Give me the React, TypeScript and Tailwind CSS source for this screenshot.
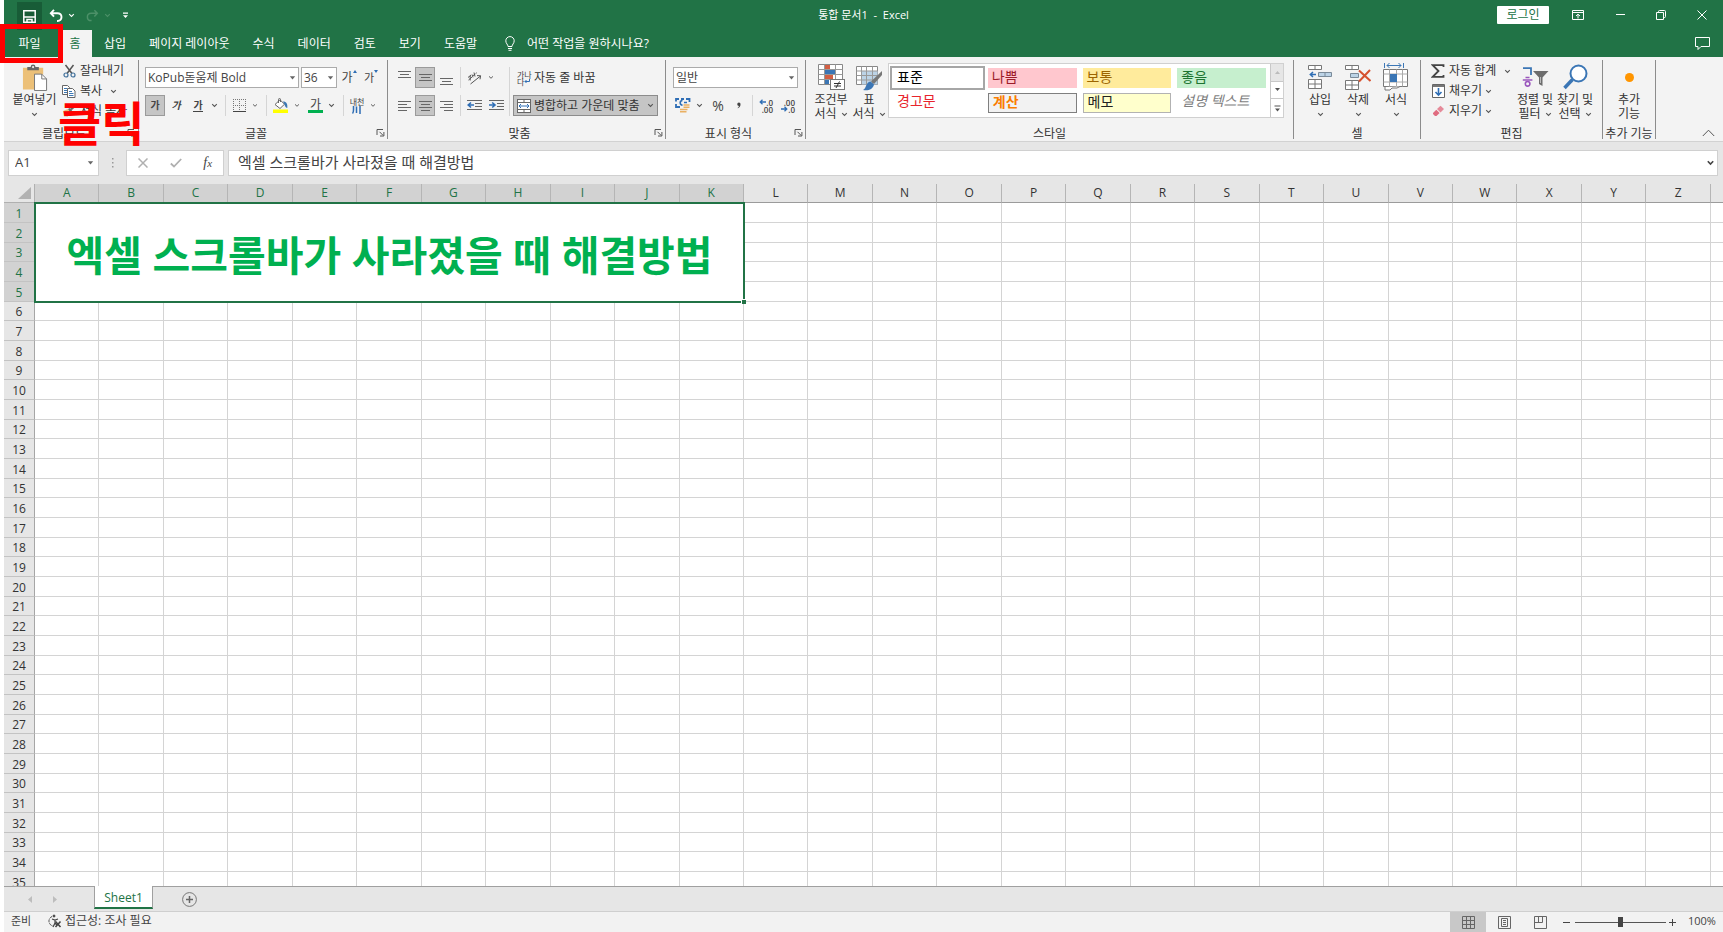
import React from "react";

type Kids = { children?: React.ReactNode };

const COLUMNS = "ABCDEFGHIJKLMNOPQRSTUVWXYZ".split("");
const ROWS = Array.from({ length: 35 }, (_, i) => i + 1);
const MERGED_COLS = 11;
const MERGED_ROWS = 5;
const TITLE = "엑셀 스크롤바가 사라졌을 때 해결방법";

/* ---------- small drawing helpers ---------- */

function Chevron({ className = "text-[#555]" }: { className?: string }) {
  return (
    <svg width="7" height="5" viewBox="0 0 7 5" fill="none" className={className} aria-hidden="true">
      <path d="M1.2 1.2 3.5 3.4 5.8 1.2" stroke="currentColor" strokeWidth="1.1" />
    </svg>
  );
}

function Triangle() {
  return (
    <svg width="7" height="4" viewBox="0 0 7 4" className="text-[#666]" aria-hidden="true">
      <path d="M0.8 0.3h5.4L3.5 3.6z" fill="currentColor" />
    </svg>
  );
}

function Launcher({ label }: { label: string }) {
  return (
    <button type="button" aria-label={label} className="flex w-[14px] items-center justify-center">
      <svg width="9" height="9" viewBox="0 0 9 9" fill="none" stroke="#555" aria-hidden="true">
        <path d="M1 7V1.5h6M3.5 3.8l3.6 3.6M7.9 4v4H4" />
      </svg>
    </button>
  );
}

function Lines({ rows, width = 13 }: { rows: [number, number, number][]; width?: number }) {
  return (
    <svg width={width} height="14" viewBox={`0 0 ${width} 14`} stroke="#666" aria-hidden="true">
      {rows.map(([x1, x2, y], i) => (
        <path key={i} d={`M${x1} ${y}.5H${x2}`} />
      ))}
    </svg>
  );
}

/* ---------- ribbon building blocks ---------- */

function Group({
  label,
  width,
  launcher = false,
  children,
}: Kids & { label: string; width: string; launcher?: boolean }) {
  return (
    <section aria-label={label} className={`flex h-[79px] shrink-0 flex-col border-r border-[#8c8c8c] ${width}`}>
      <div className="flex h-[66px]">{children}</div>
      <div className="flex h-[13px] text-[#333]">
        <span className="flex-1 text-center leading-[15px] whitespace-nowrap">{label}</span>
        {launcher && <Launcher label={`${label} 설정`} />}
      </div>
    </section>
  );
}

function Tool({
  label,
  className = "w-[22px]",
  active = false,
  children,
}: Kids & { label: string; className?: string; active?: boolean }) {
  return (
    <button
      type="button"
      aria-label={label}
      className={`flex h-[21px] shrink-0 items-center justify-center ${className} ${
        active ? "border border-[#9a9a9a] bg-[#c5c5c5]" : ""
      }`}
    >
      {children}
    </button>
  );
}

function Divider({ className = "h-[21px]" }: { className?: string }) {
  return <span className={`w-px shrink-0 bg-[#d5d5d5] ${className}`} />;
}

function BigButton({
  icon,
  lines,
  width,
  chevron = "none",
}: {
  icon: React.ReactNode;
  lines: string[];
  width: string;
  chevron?: "none" | "below" | "inline";
}) {
  return (
    <button type="button" className={`flex shrink-0 flex-col items-center pt-px text-[#333] ${width}`}>
      <span className="flex h-8 items-center justify-center">{icon}</span>
      {lines.map((line, i) => (
        <span key={line} className="flex items-center gap-1 leading-[14px] whitespace-nowrap">
          {line}
          {chevron === "inline" && i === lines.length - 1 && <Chevron />}
        </span>
      ))}
      {chevron === "below" && (
        <span className="flex h-[14px] items-center">
          <Chevron />
        </span>
      )}
    </button>
  );
}

function SmallButton({ icon, text, chevron, gap = "gap-[3px]" }: { icon: React.ReactNode; text: string; chevron?: boolean; gap?: string }) {
  return (
    <button type="button" className="flex h-5 items-center gap-1 whitespace-nowrap text-[#333]">
      <span className="flex w-[14px] justify-center">{icon}</span>
      <span className={`flex items-center ${gap}`}>
        {text}
        {chevron && <Chevron />}
      </span>
    </button>
  );
}

function DropDown({ label, value, width }: { label: string; value: string; width: string }) {
  return (
    <div className={`relative shrink-0 ${width}`}>
      <select
        aria-label={label}
        defaultValue={value}
        className="block h-[21px] w-full appearance-none border border-[#ababab] bg-white pl-[2px] leading-[19px] text-[#444] outline-none"
      >
        <option>{value}</option>
      </select>
      <span className="pointer-events-none absolute inset-y-0 right-[3px] flex items-center">
        <Triangle />
      </span>
    </div>
  );
}

/* ---------- ribbon icons ---------- */

const PasteIcon = () => (
  <svg width="26" height="27" viewBox="0 0 26 28" aria-hidden="true">
    <path d="M.5 4h21v7h-9v15.500H.5z" fill="#ecc078" />
    <path d="M5 3h3.500a2.500 2.500 0 0 1 5 0H17v3.500H5z" fill="#666" />
    <circle cx="11" cy="3.2" r="1.1" fill="#f2f2f2" />
    <path d="M12.500 10.500h7.500l5 5v12h-12.500z" fill="#fff" stroke="#777" />
    <path d="M20 10.500v5h5" fill="none" stroke="#777" />
  </svg>
);

const CutIcon = () => (
  <svg width="13" height="14" viewBox="0 0 13 14" fill="none" aria-hidden="true">
    <path d="M2.500 1 9 9.500M10.500 1 4 9.500" stroke="#555" strokeWidth="1.500" />
    <circle cx="3" cy="11" r="2" stroke="#41719c" strokeWidth="1.200" />
    <circle cx="10" cy="11" r="2" stroke="#41719c" strokeWidth="1.200" />
  </svg>
);

const CopyIcon = () => (
  <svg width="14" height="13" viewBox="0 0 14 13" aria-hidden="true">
    <path d="M0.500 0.500h5l2 2v7h-7z" fill="#fff" stroke="#666" />
    <path d="M2 3.500h3M2 5.500h3M2 7.500h3" stroke="#3c78b4" />
    <path d="M5.500 3.500h5l2.500 2.500v6.500h-7.500z" fill="#fff" stroke="#666" />
    <path d="M7 6.500h3M7 8.500h4.500M7 10.500h4.500" stroke="#3c78b4" />
  </svg>
);

const BrushIcon = () => (
  <svg width="14" height="13" viewBox="0 0 14 13" aria-hidden="true">
    <path d="M1 6l5-2 3 4-4 4z" fill="#ecc078" />
    <path d="M6 4l2-1 3 4-2 1.500z" fill="#666" />
    <path d="M9 4.500 13 1" stroke="#666" strokeWidth="2" />
  </svg>
);

const BordersIcon = () => (
  <svg width="13" height="13" viewBox="0 0 13 13" stroke="#777" fill="none" aria-hidden="true">
    <path d="M0 .5h13M.5 0v12M12.500 0v12M6.500 0v12M0 6.500h13" strokeDasharray="1 1" />
    <path d="M0 12.500h13" stroke="#444" />
  </svg>
);

const FillIcon = () => (
  <svg width="15" height="15" viewBox="0 0 15 15" aria-hidden="true">
    <path d="M2 6.500 7 1.800l4.500 4.400L7 10.500z" fill="#fff" stroke="#666" />
    <path d="M5.500 5V1.500a1 1 0 0 1 2 0V4" fill="none" stroke="#666" />
    <path d="M10 3.500c3.500 0 4.800 2.500 4.300 6.500-2-.5-2.300-2.500-3-4z" fill="#3c78b4" />
    <rect y="11.500" width="15" height="3.500" fill="#ffff00" />
  </svg>
);

const OrientationIcon = () => (
  <svg width="15" height="14" viewBox="0 0 15 14" fill="none" stroke="#555" aria-hidden="true">
    <path d="M1 6.500 4 4M3.200 5v4.500M1.500 9l3.500-3M5 3.500l1 2.800M7 1.500l1 4M5.800 4.800l2-1.400M8.500 2.800l1.200-1" />
    <path d="M3.500 13 13.500 5M10 4.600l3.600.2-.6 3.500" />
  </svg>
);

const IndentIcon = ({ out = false }: { out?: boolean }) => (
  <svg width="15" height="13" viewBox="0 0 15 13" aria-hidden="true">
    <path d="M0 1.500h15M8 4.500h7M8 7.500h7M0 10.500h15" stroke="#666" />
    {out ? (
      <path d="M7 6H2M4 3.500 1.200 6 4 8.500" stroke="#2f6eb5" strokeWidth="1.600" fill="none" />
    ) : (
      <path d="M0 6h5M3.200 3.500 6 6 3.200 8.500" stroke="#2f6eb5" strokeWidth="1.600" fill="none" />
    )}
  </svg>
);

const WrapIcon = () => (
  <span className="flex w-[14px] flex-col text-[8px] leading-[7px] text-[#444]">
    <span className="whitespace-nowrap">가나</span>
    <span className="flex items-center">
      다
      <svg width="6" height="5" viewBox="0 0 6 5" fill="none" stroke="#2f6eb5" aria-hidden="true">
        <path d="M5.500 0v2.500H1M2.500 1 1 2.500 2.500 4" />
      </svg>
    </span>
  </span>
);

const MergeIcon = () => (
  <svg width="14" height="14" viewBox="0 0 14 14" aria-hidden="true">
    <rect x=".5" y=".5" width="13" height="13" fill="#fff" stroke="#666" />
    <path d="M.5 3.500h13M.5 10.500h13M7 .5v3M7 10.500v3" stroke="#666" />
    <path d="M2 7h10M4 5 2 7l2 2M10 5l2 2-2 2" stroke="#2f6eb5" fill="none" />
  </svg>
);

const CurrencyIcon = () => (
  <svg width="16" height="15" viewBox="0 0 16 15" aria-hidden="true">
    <path d="M1 3.500V1h3M11 1h3.500v3M1 6v3h4M6 1h3" fill="none" stroke="#2f6eb5" strokeWidth="1.800" />
    <path d="M7.500 2.500a2.300 2.300 0 1 0 0 4.600M9 4.500h3" fill="none" stroke="#2f6eb5" strokeWidth="1.600" />
    <path d="M8.500 7h6M8.500 9.200h6M5 11.500h7.500M5 13.700h6.500" stroke="#eab062" strokeWidth="1.600" />
  </svg>
);

const DecimalIcon = ({ more = false }: { more?: boolean }) => (
  <span className="flex w-[14px] flex-col text-[8px] leading-[7px] font-semibold text-[#444]">
    <span className="flex items-center justify-end">
      {more && (
        <svg width="7" height="6" viewBox="0 0 7 6" fill="none" stroke="#2f6eb5" strokeWidth="1.300" aria-hidden="true">
          <path d="M7 3H1M3.500.8 1.200 3l2.300 2.200" />
        </svg>
      )}
      {more ? ".0" : ".00"}
    </span>
    <span className="flex items-center justify-end">
      {!more && (
        <svg width="7" height="6" viewBox="0 0 7 6" fill="none" stroke="#2f6eb5" strokeWidth="1.300" aria-hidden="true">
          <path d="M0 3h6M3.500.8 5.800 3 3.500 5.200" />
        </svg>
      )}
      {more ? ".00" : ".0"}
    </span>
  </span>
);

const ConditionalIcon = () => (
  <svg width="28" height="28" viewBox="0 0 28 28" aria-hidden="true">
    <path d="M1.500 1.500h24v20h-24z" fill="#fff" stroke="#888" />
    <path d="M7.500 1.500v20M18.500 1.500v20M1.500 6.500h24M1.500 11.500h24M1.500 16.500h24" stroke="#999" />
    <path d="M8 2h5v4H8zM8 12h8v4H8z" fill="#d35f43" />
    <path d="M8 7h10v4H8zM8 17h4v4H8z" fill="#3b76b5" />
    <rect x="13.500" y="16.500" width="14" height="10" fill="#fff" stroke="#777" />
    <path d="M17 20.500h7M17 23h7M22.500 18.500l-3.500 6.500" stroke="#333" />
  </svg>
);

const TableFormatIcon = () => (
  <svg width="28" height="28" viewBox="0 0 28 28" aria-hidden="true">
    <path d="M1.500 3.500h21v18h-21z" fill="#fff" stroke="#888" />
    <path d="M7 8h15.500v13.500H7z" fill="#bcd3e6" />
    <path d="M6.500 3.500v18M11.500 3.500v18M17.500 3.500v18M1.500 8h21M1.500 12.500h21M1.500 17h21" stroke="#999" />
    <path d="M27 8v4l-8 9-3-2.500z" fill="#777" />
    <path d="M15.500 18.500l3.500 3c-1 5-6 6.500-11 5.500 3.500-1.500 2.500-7.500 7.500-8.500z" fill="#3b76b5" />
  </svg>
);

const InsertCellsIcon = () => (
  <svg width="24" height="26" viewBox="0 0 24 26" aria-hidden="true">
    <path d="M.5 1.500h13v4H.5zM7 1.500v4M.5 15.500h13v9H.5zM.5 20h13M7 15.500v9" fill="#fff" stroke="#777" />
    <path d="M10.500 8.500h13v4h-13zM17 8.500v4" fill="#bcd3e6" stroke="#7a8a99" />
    <path d="M8 10.500H3M5 8 2.300 10.500 5 13" fill="none" stroke="#2f6eb5" strokeWidth="1.500" />
  </svg>
);

const DeleteCellsIcon = () => (
  <svg width="26" height="26" viewBox="0 0 26 26" aria-hidden="true">
    <path d="M.5 1.500h13v4H.5zM7 1.500v4M.5 16.500h13v9H.5zM.5 21h13M7 16.500v9" fill="#fff" stroke="#777" />
    <path d="M5.500 9.500h8v4h-8z" fill="#bcd3e6" stroke="#7a8a99" />
    <path d="M14 6.500 25.500 17M25 6 14 17.500" fill="none" stroke="#d6512f" strokeWidth="2" />
  </svg>
);

const FormatCellsIcon = () => (
  <svg width="26" height="28" viewBox="0 0 26 28" aria-hidden="true">
    <path d="M1.500 0v5M20.500 0v5M4 2.500h14M6.500 0 4 2.500 6.500 5M15.500 0 18 2.500 15.500 5" fill="none" stroke="#3b76b5" />
    <path d="M.5 6.500h24v17H.5z" fill="#fff" stroke="#777" />
    <path d="M6.500 6.500v17M13.500 6.500v17M19.500 6.500v17M.5 11h24M.5 19h24" stroke="#aaa" />
    <path d="M7 11h7v8H7z" fill="#3b76b5" />
    <path d="M2 24v3h5l2-2h5l3-1.500" fill="#fff" stroke="#777" />
  </svg>
);

const SigmaIcon = () => (
  <svg width="14" height="14" viewBox="0 0 14 14" fill="none" stroke="#444" strokeWidth="1.800" aria-hidden="true">
    <path d="M12.500 3V1.200H1.800L7.500 7l-5.700 5.800h10.700V11" />
  </svg>
);

const FillDownIcon = () => (
  <svg width="13" height="14" viewBox="0 0 13 14" aria-hidden="true">
    <path d="M.5.5h12v13H.5z" fill="#fff" stroke="#666" />
    <path d="M1 1h11v2H1z" fill="#777" />
    <path d="M6.500 4v7M3.500 8l3 3.200 3-3.200" fill="none" stroke="#2f6eb5" strokeWidth="1.600" />
  </svg>
);

const EraserIcon = () => (
  <svg width="13" height="12" viewBox="0 0 13 12" aria-hidden="true">
    <path d="M8.500.8 12 4 8.500 7.500 5 4z" fill="#e58a99" />
    <path d="M4.300 4.800 7.600 8 4.500 11H3L1 9V8z" fill="#e06c80" />
  </svg>
);

const SortIcon = () => (
  <svg width="27" height="22" viewBox="0 0 27 22" fill="none" aria-hidden="true">
    <path d="M1 2.200h8V9" stroke="#3b76b5" strokeWidth="1.800" />
    <path d="M3.500 11.500h4M.8 14h9.600" stroke="#9a57bd" strokeWidth="1.600" />
    <circle cx="5.600" cy="17.800" r="2.300" stroke="#9a57bd" strokeWidth="1.600" />
    <path d="M11 5h15.500l-6 6.500V20l-3.500-2v-6.500z" fill="#6d6d6d" />
    <path d="M18.500 11v6" stroke="#bbb" />
  </svg>
);

const FindIcon = () => (
  <svg width="25" height="26" viewBox="0 0 25 26" fill="none" stroke="#3b76b5" aria-hidden="true">
    <circle cx="15.500" cy="9.500" r="8" fill="#fff" strokeWidth="2" />
    <path d="M9.500 15.500 1.500 24" strokeWidth="3.500" />
  </svg>
);

/* ---------- page sections ---------- */

function TitleBar() {
  return (
    <header className="grid h-[30px] grid-cols-[1fr_auto_1fr] items-center text-white">
      <div className="flex h-full items-center pl-[13px]">
        <button type="button" aria-label="저장" className="mt-[2px] flex h-7 w-[25px] items-center justify-center bg-[#185c37]">
          <svg width="13" height="13" viewBox="0 0 13 13" fill="none" stroke="#fff" strokeWidth="1.500" aria-hidden="true">
            <path d="M.8.8h11.400v11.400H.8zM.8 7h11.400M4 12V9.500h5V12" />
          </svg>
        </button>
        <button type="button" aria-label="실행 취소" className="ml-[6px] flex w-[15px] justify-center">
          <svg width="14" height="13" viewBox="0 0 14 13" fill="none" stroke="#fff" strokeWidth="1.900" aria-hidden="true">
            <path d="M5 .8 1.800 4.200 5 7.600M2 4.200h6.500c2.500 0 4 1.500 4 3.800S11 12 8.500 12H8" />
          </svg>
        </button>
        <button type="button" aria-label="실행 취소 목록" className="ml-[5px]">
          <Chevron className="text-white" />
        </button>
        <button type="button" aria-label="다시 실행" className="ml-[10px] flex w-[14px] justify-center">
          <svg width="13" height="13" viewBox="0 0 14 13" fill="none" stroke="#4c9068" strokeWidth="1.600" aria-hidden="true">
            <path d="M9 .8l3.200 3.400L9 7.600M12 4.200H5.500c-2.500 0-4 1.500-4 3.800S3 12 5.500 12H6" />
          </svg>
        </button>
        <button type="button" aria-label="다시 실행 목록" className="ml-[5px]">
          <Chevron className="text-[#4c9068]" />
        </button>
        <button type="button" aria-label="빠른 실행 도구 모음 사용자 지정" className="ml-[11px]">
          <svg width="7" height="7" viewBox="0 0 7 7" aria-hidden="true">
            <path d="M1 .5h5v1.200H1zM1 3.200h5L3.500 6z" fill="#fff" />
          </svg>
        </button>
      </div>
      <h1 className="text-[11px] whitespace-pre">통합 문서1{"  -  "}Excel</h1>
      <div className="flex items-center justify-end">
        <button type="button" className="mr-[20px] h-[18px] w-[52px] rounded-[1px] bg-white text-[12px] leading-[18px] text-[#217346]">
          로그인
        </button>
        <button type="button" aria-label="리본 메뉴 표시 옵션" className="flex w-[18px] justify-center">
          <svg width="12" height="10" viewBox="0 0 12 10" fill="none" stroke="#fff" aria-hidden="true">
            <path d="M.5.5h11v9H.5zM.5 2.500h11M6 8.500v-4M4 6l2-1.800L8 6" />
          </svg>
        </button>
        <button type="button" aria-label="최소화" className="ml-[24px] flex w-[18px] justify-center">
          <svg width="9" height="9" viewBox="0 0 9 9" stroke="#fff" aria-hidden="true">
            <path d="M0 3.500h9" />
          </svg>
        </button>
        <button type="button" aria-label="이전 크기로 복원" className="ml-[23px] flex w-[18px] justify-center">
          <svg width="10" height="10" viewBox="0 0 10 10" fill="none" stroke="#fff" aria-hidden="true">
            <path d="M.5 2.500h7v7h-7zM2.500 2.500V1.500q0-1 1-1h5q1 0 1 1v5q0 1-1 1h-1" />
          </svg>
        </button>
        <button type="button" aria-label="닫기" className="mr-[12px] ml-[23px] flex w-[18px] justify-center">
          <svg width="10" height="10" viewBox="0 0 10 10" stroke="#fff" aria-hidden="true">
            <path d="M.5.5l9 9M9.500.5l-9 9" />
          </svg>
        </button>
      </div>
    </header>
  );
}

function TabBar() {
  const tabs = ["삽입", "페이지 레이아웃", "수식", "데이터", "검토", "보기", "도움말"];
  return (
    <nav className="flex h-[27px] items-stretch text-white">
      <button type="button" className="w-[54px] pr-[3px]">파일</button>
      <button type="button" className="w-[34px] bg-[#f3f3f3] text-[#217346]">홈</button>
      {tabs.map((tab) => (
        <button key={tab} type="button" className="pr-[11px] pl-3 whitespace-nowrap">
          {tab}
        </button>
      ))}
      <button type="button" className="ml-[17px] flex items-center gap-3 whitespace-nowrap">
        <svg width="10" height="15" viewBox="0 0 10 15" fill="none" stroke="#fff" aria-hidden="true">
          <path d="M3 10.500C3 8.500.8 7.500.8 4.800a4.200 4.200 0 0 1 8.400 0C9.200 7.500 7 8.500 7 10.500zM3 12.500h4M3.500 14.300h3" />
        </svg>
        어떤 작업을 원하시나요?
      </button>
      <button type="button" aria-label="메모" className="mr-[13px] ml-auto">
        <svg width="15" height="13" viewBox="0 0 15 13" fill="none" stroke="#fff" aria-hidden="true">
          <path d="M.5.5h14v9H6l-3 3v-3H.5z" />
        </svg>
      </button>
    </nav>
  );
}

const STYLE_CELLS: [string, string][] = [
  ["나쁨", "bg-[#ffc7ce] pb-[3px] text-[#9c1c2a]"],
  ["보통", "bg-[#ffeb9c] pb-[3px] text-[#9c6500]"],
  ["좋음", "bg-[#c6efce] pb-[3px] text-[#1c7430]"],
  ["경고문", "pb-[4px] text-[#e8242c]"],
  ["계산", "border border-[#7f7f7f] bg-[#f2f2f2] pb-[4px] font-bold text-[#fa7d00]"],
  ["메모", "border border-[#b2b2b2] bg-[#ffffcc] pb-[4px] text-[#222]"],
  ["설명 텍스트", "pb-[4px] text-[#7f7f7f] italic"],
];

function StyleGallery() {
  return (
    <div className="mt-[3px] flex h-[55px] w-[396px] border border-[#d0d0d0] bg-white text-[14px]">
      <div className="grid flex-1 grid-cols-4 grid-rows-2 gap-x-[6px] gap-y-[5px] px-1 py-1">
        <button type="button" className="-mx-[3px] -my-[2px] border-2 border-[#a6a6a6] bg-white pb-[3px] pl-[5px] text-left leading-[17px] text-black">
          표준
        </button>
        {STYLE_CELLS.map(([name, look]) => (
          <button key={name} type="button" className={`h-5 pl-1 text-left leading-[16px] whitespace-nowrap ${look}`}>
            {name}
          </button>
        ))}
      </div>
      <div className="grid w-[13px] grid-rows-3 divide-y divide-[#c8c8c8] border-l border-[#c8c8c8]">
        <button type="button" aria-label="위로" className="flex items-center justify-center bg-[#e6e6e6]">
          <svg width="5" height="3" viewBox="0 0 5 3" aria-hidden="true"><path d="M0 3h5L2.500 0z" fill="#bbb" /></svg>
        </button>
        <button type="button" aria-label="아래로" className="flex items-center justify-center">
          <svg width="5" height="3" viewBox="0 0 5 3" aria-hidden="true"><path d="M0 0h5L2.500 3z" fill="#555" /></svg>
        </button>
        <button type="button" aria-label="자세히" className="flex items-center justify-center">
          <svg width="7" height="7" viewBox="0 0 7 7" aria-hidden="true"><path d="M.5.500h6v1h-6zM1 3.500h5L3.500 6.500z" fill="#555" /></svg>
        </button>
      </div>
    </div>
  );
}

function Ribbon() {
  return (
    <div className="flex h-[85px] border-b border-[#d2d2d2] bg-[#f3f3f3] pt-[3px]">
      <Group label="클립보드" width="w-[135px]" launcher>
        <BigButton icon={<PasteIcon />} lines={["붙여넣기"]} width="w-[58px] pl-[3px]" chevron="below" />
        <div className="flex flex-col pt-px">
          <SmallButton icon={<CutIcon />} text="잘라내기" />
          <SmallButton icon={<CopyIcon />} text="복사" chevron gap="gap-2" />
          <SmallButton icon={<BrushIcon />} text="서식 복사" />
        </div>
      </Group>

      <Group label="글꼴" width="w-[249px]" launcher>
        <div className="flex flex-col gap-[7px] pt-[7px] pl-[6px]">
          <div className="flex gap-[2px]">
            <DropDown label="글꼴" value="KoPub돋움제 Bold" width="w-[154px]" />
            <DropDown label="글꼴 크기" value="36" width="w-[36px]" />
            <Tool label="글꼴 크기 크게" className="w-5">
              <span className="flex items-start text-[12px] leading-[16px] text-[#444]">
                가<svg width="4" height="3" viewBox="0 0 4 3" aria-hidden="true"><path d="M0 3h4L2 0z" fill="#2f6eb5" /></svg>
              </span>
            </Tool>
            <Tool label="글꼴 크기 작게" className="w-5">
              <span className="flex items-start text-[11px] leading-[16px] text-[#444]">
                가<svg width="4" height="3" viewBox="0 0 4 3" aria-hidden="true"><path d="M0 0h4L2 3z" fill="#2f6eb5" /></svg>
              </span>
            </Tool>
          </div>
          <div className="flex text-[#444]">
            <Tool label="굵게" className="w-5" active>
              <span className="text-[10px] font-bold">가</span>
            </Tool>
            <Tool label="기울임꼴">
              <span className="text-[10px] font-bold italic">가</span>
            </Tool>
            <Tool label="밑줄">
              <span className="border-b border-[#444] text-[10px] leading-[11px] font-bold">가</span>
            </Tool>
            <Tool label="밑줄 종류" className="w-[10px]"><Chevron /></Tool>
            <span className="w-[6px]" />
            <Divider />
            <Tool label="테두리" className="w-[26px]"><BordersIcon /></Tool>
            <Tool label="테두리 종류" className="w-[6px]"><Chevron /></Tool>
            <span className="w-[8px]" />
            <Divider />
            <Tool label="채우기 색" className="w-[27px]"><FillIcon /></Tool>
            <Tool label="채우기 색 목록" className="w-[6px]"><Chevron /></Tool>
            <Tool label="글꼴 색" className="ml-[3px] w-[25px]">
              <span className="flex flex-col items-center text-[12px] leading-[11px]">
                가<span className="h-[3px] w-[15px] bg-[#00b050]" />
              </span>
            </Tool>
            <Tool label="글꼴 색 목록" className="w-[7px]"><Chevron /></Tool>
            <span className="w-[8px]" />
            <Divider />
            <Tool label="윗주 필드" className="w-[26px]">
              <span className="flex flex-col items-center text-[8px] leading-[8px] whitespace-nowrap">
                내천
                <svg width="9" height="8" viewBox="0 0 9 8" fill="none" stroke="#2f6eb5" strokeWidth="1.500" aria-hidden="true">
                  <path d="M1.500 0v4Q1.500 6.500.5 7.500M4.500.5V7M8 0v8" />
                </svg>
              </span>
            </Tool>
            <Tool label="윗주 옵션" className="w-[6px]"><Chevron /></Tool>
          </div>
        </div>
      </Group>

      <Group label="맞춤" width="w-[278px]" launcher>
        <div className="flex flex-col gap-[7px] pt-[7px] pl-[5px]">
          <div className="flex">
            <Tool label="위쪽 맞춤"><Lines rows={[[0, 13, 0], [2, 11, 3], [0, 13, 6]]} /></Tool>
            <Tool label="가운데 맞춤(세로)" className="w-5" active><Lines rows={[[0, 13, 3], [2, 11, 6], [0, 13, 9]]} /></Tool>
            <Tool label="아래쪽 맞춤"><Lines rows={[[0, 13, 7], [2, 11, 10], [0, 13, 13]]} /></Tool>
            <span className="w-[3px]" />
            <Divider />
            <Tool label="방향" className="w-[27px]"><OrientationIcon /></Tool>
            <Tool label="방향 목록" className="w-[6px]"><Chevron /></Tool>
          </div>
          <div className="flex">
            <Tool label="왼쪽 맞춤"><Lines rows={[[0, 13, 2], [0, 9, 5], [0, 13, 8], [0, 9, 11]]} /></Tool>
            <Tool label="가운데 맞춤" className="w-5" active><Lines rows={[[0, 13, 2], [2, 11, 5], [0, 13, 8], [2, 11, 11]]} /></Tool>
            <Tool label="오른쪽 맞춤"><Lines rows={[[0, 13, 2], [4, 13, 5], [0, 13, 8], [4, 13, 11]]} /></Tool>
            <span className="w-[3px]" />
            <Divider />
            <Tool label="내어쓰기" className="w-[26px]"><IndentIcon out /></Tool>
            <Tool label="들여쓰기" className="w-[18px]"><IndentIcon /></Tool>
          </div>
        </div>
        <div className="ml-[4px] flex pt-[7px]">
          <Divider className="h-[49px]" />
        </div>
        <div className="flex flex-col gap-[7px] pt-[7px] pl-[3px] text-[#333]">
          <button type="button" className="flex h-[21px] items-center gap-[3px] pl-[4px] whitespace-nowrap">
            <WrapIcon />
            자동 줄 바꿈
          </button>
          <button type="button" className="flex h-[21px] w-[145px] items-center gap-[3px] border border-[#8c8c8c] bg-[#c5c5c5] px-[3px] whitespace-nowrap">
            <MergeIcon />
            병합하고 가운데 맞춤
            <span className="ml-auto"><Chevron /></span>
          </button>
        </div>
      </Group>

      <Group label="표시 형식" width="w-[140px]" launcher>
        <div className="flex flex-col gap-[7px] pt-[7px] pl-[7px]">
          <DropDown label="표시 형식" value="일반" width="w-[125px]" />
          <div className="flex text-[#444]">
            <Tool label="회계 표시 형식" className="w-[20px]"><CurrencyIcon /></Tool>
            <Tool label="회계 표시 형식 목록" className="w-[13px]"><Chevron /></Tool>
            <Tool label="백분율 스타일" className="w-[24px]"><span className="text-[14px]">%</span></Tool>
            <Tool label="쉼표 스타일" className="w-[17px]">
              <svg width="4" height="7" viewBox="0 0 5 8" aria-hidden="true">
                <path d="M2.400.3a2 2 0 0 1 2 2.200C4.400 5 3 6.800 1 7.500L.7 7c1-.6 1.600-1.400 1.700-2.500A2.100 2.100 0 0 1 2.400.3z" fill="#444" />
              </svg>
            </Tool>
            <span className="w-[5px]" />
            <Divider />
            <Tool label="자릿수 늘림" className="w-[26px]"><DecimalIcon more /></Tool>
            <Tool label="자릿수 줄임" className="w-[18px]"><DecimalIcon /></Tool>
          </div>
        </div>
      </Group>

      <Group label="스타일" width="w-[488px]">
        <div className="flex pl-[6px]">
          <BigButton icon={<ConditionalIcon />} lines={["조건부", "서식"]} width="w-[38px]" chevron="inline" />
          <BigButton icon={<TableFormatIcon />} lines={["표", "서식"]} width="w-[38px]" chevron="inline" />
          <StyleGallery />
        </div>
      </Group>

      <Group label="셀" width="w-[127px]">
        <div className="flex pl-[7px]">
          <BigButton icon={<InsertCellsIcon />} lines={["삽입"]} width="w-[38px]" chevron="below" />
          <BigButton icon={<DeleteCellsIcon />} lines={["삭제"]} width="w-[38px]" chevron="below" />
          <BigButton icon={<FormatCellsIcon />} lines={["서식"]} width="w-[38px]" chevron="below" />
        </div>
      </Group>

      <Group label="편집" width="w-[182px]">
        <div className="flex w-[94px] flex-col pt-px pl-[10px]">
          <SmallButton icon={<SigmaIcon />} text="자동 합계" chevron gap="gap-2" />
          <SmallButton icon={<FillDownIcon />} text="채우기" chevron />
          <SmallButton icon={<EraserIcon />} text="지우기" chevron />
        </div>
        <BigButton icon={<SortIcon />} lines={["정렬 및", "필터"]} width="w-10" chevron="inline" />
        <BigButton icon={<FindIcon />} lines={["찾기 및", "선택"]} width="w-10" chevron="inline" />
      </Group>

      <Group label="추가 기능" width="w-[53px]">
        <BigButton
          icon={<span className="h-[9px] w-[9px] rounded-full bg-[#ff9500]" />}
          lines={["추가", "기능"]}
          width="w-full"
        />
      </Group>

      <button type="button" aria-label="리본 메뉴 축소" className="mr-[8px] mb-[4px] ml-auto self-end">
        <svg width="13" height="8" viewBox="0 0 13 8" fill="none" stroke="#555" aria-hidden="true">
          <path d="M.8 7 6.500 1.200 12.200 7" />
        </svg>
      </button>
    </div>
  );
}

function FormulaBar() {
  return (
    <div className="flex h-[42px] items-center bg-[#e6e6e6] pr-[5px] pl-[4px]">
      <div className="flex h-[26px] w-[91px] items-center border border-[#d0d0d0] bg-white pr-[4px]">
        <input aria-label="이름 상자" defaultValue="A1" className="w-0 flex-1 bg-transparent pl-[6px] text-[13px] text-[#444] outline-none" />
        <Triangle />
      </div>
      <svg width="3" height="12" viewBox="0 0 3 12" className="mx-[12px]" aria-hidden="true">
        <path d="M1 1h1.500v1.500H1zM1 5h1.500v1.500H1zM1 9h1.500v1.500H1z" fill="#999" />
      </svg>
      <div className="flex h-[26px] w-[98px] items-center justify-around border border-[#d0d0d0] bg-white">
        <button type="button" aria-label="취소">
          <svg width="10" height="10" viewBox="0 0 10 10" stroke="#b0b0b0" strokeWidth="1.500" aria-hidden="true"><path d="M.5.5l9 9M9.500.5l-9 9" /></svg>
        </button>
        <button type="button" aria-label="입력">
          <svg width="12" height="10" viewBox="0 0 12 10" fill="none" stroke="#b0b0b0" strokeWidth="1.800" aria-hidden="true"><path d="M.8 5.500 4 8.500 11.200 1" /></svg>
        </button>
        <button type="button" aria-label="함수 삽입" className="font-['Liberation_Serif',serif] text-[14px] leading-4 text-[#444] italic">
          f<span className="text-[11px]">x</span>
        </button>
      </div>
      <div className="ml-1 flex h-[26px] flex-1 items-center border border-[#d0d0d0] bg-white pr-[3px]">
        <input aria-label="수식 입력줄" defaultValue={TITLE} className="w-0 flex-1 bg-transparent pb-[2px] pl-[9px] text-[15px] leading-[22px] text-[#444] outline-none" />
        <svg width="7" height="6" viewBox="0 0 7 6" fill="none" stroke="#444" strokeWidth="1.600" aria-hidden="true"><path d="M.8 1.200 3.500 4 6.200 1.200" /></svg>
      </div>
    </div>
  );
}

function Sheet() {
  return (
    <main className="h-0 flex-1 overflow-hidden bg-white">
      <table className="w-full table-fixed border-separate border-spacing-0 text-[12px]">
        <colgroup>
          <col className="w-[31px]" />
          {COLUMNS.map((c) => (
            <col key={c} />
          ))}
          <col className="w-[12px]" />
        </colgroup>
        <thead>
          <tr className="h-[19px]">
            <th aria-label="모두 선택" className="border-r border-b border-[#b0b0b0] bg-[#e6e6e6] p-0">
              <svg width="13" height="12" viewBox="0 0 13 12" className="mr-[3px] ml-auto block" aria-hidden="true">
                <path d="M13 0v12H0z" fill="#b2b2b2" />
              </svg>
            </th>
            {COLUMNS.map((c, i) => (
              <th
                key={c}
                scope="col"
                className={`border-r border-b border-r-[#b5b5b5] p-0 pb-[2px] leading-[15px] font-normal ${
                  i < MERGED_COLS ? "border-b-[#217346] bg-[#d2d2d2] text-[#217346]" : "border-b-[#9b9b9b] bg-[#e6e6e6] text-[#333]"
                }`}
              >
                {c}
              </th>
            ))}
            <td className="border-b border-[#9b9b9b] bg-[#e6e6e6] p-0" />
          </tr>
        </thead>
        <tbody>
          {ROWS.map((r) => (
            <tr key={r} className={r % 3 === 0 ? "h-[19px]" : "h-[20px]"}>
              <th
                scope="row"
                className={`border-r border-b border-b-[#c3c3c3] p-0 pt-[2px] leading-[16px] font-normal ${
                  r <= MERGED_ROWS ? "border-r-[#217346] bg-[#d2d2d2] text-[#217346]" : "border-r-[#a6a6a6] bg-[#e6e6e6] text-[#333]"
                }`}
              >
                {r}
              </th>
              {r === 1 && (
                <td colSpan={MERGED_COLS} rowSpan={MERGED_ROWS} className="relative p-0 pt-1 text-center text-[41px] leading-[60px] font-bold whitespace-nowrap text-[#00b050]">
                  {TITLE}
                  <span className="pointer-events-none absolute -inset-px border-2 border-[#217346]" />
                  <span className="absolute -right-[2px] -bottom-[2px] h-[5px] w-[5px] border-t border-l border-white bg-[#217346]" />
                </td>
              )}
              {COLUMNS.slice(r <= MERGED_ROWS ? MERGED_COLS : 0).map((c) => (
                <td key={c} className="border-r border-b border-[#d4d4d4] p-0" />
              ))}
              <td className="border-b border-[#d4d4d4] p-0" />
            </tr>
          ))}
        </tbody>
      </table>
    </main>
  );
}

function SheetTabs() {
  return (
    <div className="flex h-[25px] border-t border-[#a0a0a0] bg-[#e6e6e6]">
      <div className="flex w-[90px] items-center gap-[21px] pl-[24px]">
        <button type="button" aria-label="이전 시트">
          <svg width="4" height="7" viewBox="0 0 4 7" aria-hidden="true"><path d="M4 0v7L0 3.500z" fill="#bdbdbd" /></svg>
        </button>
        <button type="button" aria-label="다음 시트">
          <svg width="4" height="7" viewBox="0 0 4 7" aria-hidden="true"><path d="M0 0v7l4-3.500z" fill="#bdbdbd" /></svg>
        </button>
      </div>
      <button type="button" className="-mt-px h-[23px] w-[59px] border-x border-b-2 border-x-[#a0a0a0] border-b-[#217346] bg-white pt-[2px] text-[12px] leading-4 text-[#217346]">
        Sheet1
      </button>
      <button type="button" aria-label="새 시트" className="ml-[29px]">
        <svg width="15" height="15" viewBox="0 0 15 15" fill="none" stroke="#777" aria-hidden="true">
          <circle cx="7.500" cy="7.500" r="6.900" />
          <path d="M7.500 4v7M4 7.500h7" strokeWidth="1.500" stroke="#666" />
        </svg>
      </button>
    </div>
  );
}

function StatusBar() {
  return (
    <footer className="flex h-[21px] items-stretch border-t border-[#cfcfcf] bg-[#f2f2f2] text-[#444]">
      <span className="w-[43px] pl-[7px] text-[11px] leading-[18px]">준비</span>
      <button type="button" className="flex items-center gap-[3px] pb-[2px] leading-[18px] whitespace-nowrap">
        <svg width="15" height="14" viewBox="0 0 15 14" fill="none" stroke="#444" aria-hidden="true">
          <path d="M5 2.500A5 5 0 0 0 6 12" strokeDasharray="3 1" />
          <circle cx="7" cy="2" r="1" fill="#444" />
          <path d="M5 5l3 1 3-1M8 6v3l-2 4M8 9l2 2" strokeWidth="1.200" />
          <path d="M8.500 7.500l5 5.500M13.500 7.500l-5 5.500" strokeWidth="1.600" />
        </svg>
        접근성: 조사 필요
      </button>
      <div className="ml-auto flex items-stretch pr-[8px]">
        <button type="button" aria-label="기본" className="flex w-[36px] items-center justify-center bg-[#c8c8c8]">
          <svg width="13" height="13" viewBox="0 0 13 13" fill="none" stroke="#666" aria-hidden="true">
            <path d="M.5.5h12v12H.5zM4.500.5v12M8.500.5v12M.5 4.500h12M.5 8.500h12" />
          </svg>
        </button>
        <button type="button" aria-label="페이지 레이아웃 보기" className="flex w-[36px] items-center justify-center">
          <svg width="13" height="13" viewBox="0 0 13 13" fill="none" stroke="#666" aria-hidden="true">
            <path d="M.5.5h12v12H.5zM3.500 2.500h6v8h-6zM5 4.500h3M5 6.500h3M5 8.500h3" />
          </svg>
        </button>
        <button type="button" aria-label="페이지 나누기 미리 보기" className="flex w-[36px] items-center justify-center">
          <svg width="13" height="13" viewBox="0 0 13 13" fill="none" stroke="#666" aria-hidden="true">
            <path d="M.5.5h12v12H.5zM4.500.5v6M8.500.5v6M.5 6.500h8" />
          </svg>
        </button>
        <button type="button" aria-label="축소" className="ml-[5px] flex w-[9px] items-center">
          <svg width="7" height="7" viewBox="0 0 7 7" stroke="#444" aria-hidden="true"><path d="M0 3.500h7" /></svg>
        </button>
        <input
          type="range"
          aria-label="확대/축소"
          min={0}
          max={100}
          defaultValue={50}
          className="ml-[3px] w-[91px] appearance-none bg-transparent [&::-webkit-slider-runnable-track]:h-px [&::-webkit-slider-runnable-track]:bg-[#555] [&::-webkit-slider-thumb]:-mt-[5px] [&::-webkit-slider-thumb]:h-[10px] [&::-webkit-slider-thumb]:w-[5px] [&::-webkit-slider-thumb]:appearance-none [&::-webkit-slider-thumb]:bg-[#444]"
        />
        <button type="button" aria-label="확대" className="ml-[3px] flex w-[9px] items-center">
          <svg width="7" height="7" viewBox="0 0 7 7" stroke="#444" aria-hidden="true"><path d="M0 3.500h7M3.500 0v7" /></svg>
        </button>
        <button type="button" className="ml-[10px] w-[27px] pb-[2px] text-[11px] leading-[18px]">100%</button>
      </div>
    </footer>
  );
}

export default function App() {
  return (
    <div className="relative flex h-screen flex-col overflow-hidden bg-white pl-1 font-['Open_Sans','Noto_Sans_CJK_KR',sans-serif] text-[12px]">
      <div className="bg-[#217346]">
        <TitleBar />
        <TabBar />
      </div>
      <Ribbon />
      <FormulaBar />
      <Sheet />
      <SheetTabs />
      <StatusBar />

      <div className="pointer-events-none absolute top-[24px] left-0 h-[39px] w-[63px] border-[5px] border-[#ff0000]" />
      <strong className="pointer-events-none absolute top-[99px] left-[58px] text-[47px] leading-[48px] font-bold text-[#ff0000]">클릭</strong>
    </div>
  );
}
